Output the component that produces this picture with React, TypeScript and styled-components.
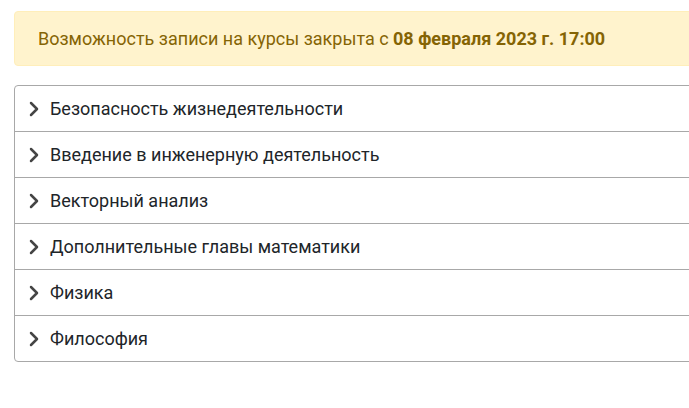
import React from 'react'
import styled, { createGlobalStyle } from 'styled-components'

const GlobalStyle = createGlobalStyle`
  body {
    margin: 0;
    overflow: hidden;
    background: #fff;
    font-family: Roboto, "Liberation Sans", sans-serif;
  }
`

const Page = styled.div`
  display: flex;
  flex-direction: column;
  gap: 19px;
  padding: 11px 0 0 14px;
  width: 720px;
  box-sizing: border-box;
`

const Notice = styled.div`
  display: flex;
  align-items: center;
  height: 55px;
  padding: 0 23px;
  box-sizing: border-box;
  background: #fff3cd;
  border: 1px solid #ffeeba;
  border-radius: 4px;
  color: #856404;
  font-size: 18px;

  b {
    font-weight: 700;
  }
`

const List = styled.div`
  display: flex;
  flex-direction: column;
  border: 1px solid #a8a8a8;
  border-radius: 4px;
  overflow: hidden;
`

const Row = styled.div`
  display: flex;
  align-items: center;
  gap: 10px;
  height: 45px;
  padding: 0 0 0 13px;
  color: #212529;
  font-size: 18px;

  & + & {
    border-top: 1px solid #a8a8a8;
  }
`

const Chevron = () => (
  <svg width="12" height="16" viewBox="0 0 12 16" fill="none">
    <path d="M3 2 L9 8 L3 14" stroke="#454545" strokeWidth="2.5" strokeLinecap="round" strokeLinejoin="round" />
  </svg>
)

const courses = [
  'Безопасность жизнедеятельности',
  'Введение в инженерную деятельность',
  'Векторный анализ',
  'Дополнительные главы математики',
  'Физика',
  'Философия',
]

export default function App() {
  return (
    <>
      <GlobalStyle />
      <Page>
        <Notice>
          Возможность записи на курсы закрыта с&nbsp;<b>08 февраля 2023 г. 17:00</b>
        </Notice>
        <List>
          {courses.map((c) => (
            <Row key={c}>
              <Chevron />
              {c}
            </Row>
          ))}
        </List>
      </Page>
    </>
  )
}
